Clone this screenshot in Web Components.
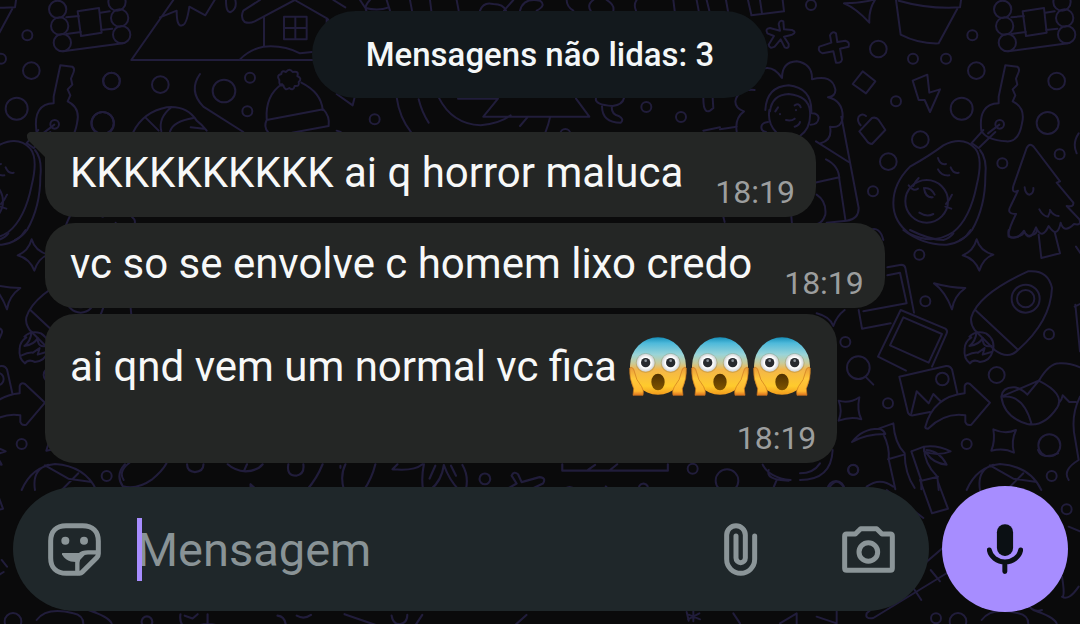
<!DOCTYPE html>
<html lang="pt-BR">
<head>
<meta charset="utf-8">
<meta name="viewport" content="width=device-width, initial-scale=1">
<title>Conversa</title>
<style>
  body { margin: 0; background: #0a0a0b; font-family: Roboto, "Liberation Sans", sans-serif; }
</style>
</head>
<body>
<chat-screen>
  <unread-pill>Mensagens não lidas: 3</unread-pill>
  <message-bubble slot="messages" time="18:19" tail>KKKKKKKKKK ai q horror maluca</message-bubble>
  <message-bubble slot="messages" time="18:19">vc so se envolve c homem lixo credo</message-bubble>
  <message-bubble slot="messages" time="18:19" stacked>ai qnd vem um normal vc fica <scream-emoji></scream-emoji><scream-emoji></scream-emoji><scream-emoji></scream-emoji></message-bubble>
  <message-composer slot="composer"></message-composer>
</chat-screen>

<script>
function define(name, html, setup) {
  const template = document.createElement('template');
  template.innerHTML = html;
  customElements.define(name, class extends HTMLElement {
    constructor() {
      super();
      this.attachShadow({ mode: 'open' }).append(template.content.cloneNode(true));
    }
    connectedCallback() { if (setup) setup(this, this.shadowRoot); }
  });
}

/* Line-art wallpaper: a motif sheet that repeats every 945 units. */
define('doodle-wallpaper', `
<style>
  :host { display: block; }
  svg { display: block; width: 100%; height: 100%; }
</style>
<svg viewBox="0 0 1080 624" preserveAspectRatio="xMidYMid slice" aria-hidden="true"
     fill="none" stroke="#211d3b" stroke-width="6" stroke-linecap="round" stroke-linejoin="round">
  <defs>
    <g id="sheet">
      <g transform="translate(720 0) scale(.33333)">
        <path d="M18 0l6 34M84 0l10 44M120 0l6 40M188 0l4 34L94 46"/>
        <circle cx="273" cy="15" r="15"/>
        <path d="M372 10q50 0 94-12q-20 30-18 70q-40-44-76-58z"/>
        <path d="M528 0l14 104q54 28 114 26L712 26M536 2q90 26 184 20l6-42"/>
        <circle cx="848" cy="28" r="26"/><circle cx="854" cy="78" r="26"/><circle cx="862" cy="128" r="26"/>
        <circle cx="1026" cy="6" r="26"/><circle cx="1034" cy="54" r="26"/><circle cx="1040" cy="104" r="26"/>
        <path d="M864 154l180-24M874 52l38-4M874 102l44-6M976 38l28-4M978 90l34-4M908 34l64-10 8 74-62 10z"/>
        <path d="M180 92l-4-20q4-14 14-8l2 24 24 2q16 6 0 14l-24 6 14 22q2 16-12 10l-12-24-18 22q-16 8-18-6l16-26-20-8q-8-14 8-16z"/>
        <path d="M334 128l-4-22q6-14 18-6l4 26 24-4q14 4 10 18l-26 6 6 32q-2 12-18 10l-8-34-32 6q-16-6-10-20z"/>
        <circle cx="475" cy="147" r="25"/><circle cx="579" cy="176" r="15"/><circle cx="678" cy="176" r="15"/>
        <circle cx="757" cy="106" r="15"/><circle cx="769" cy="212" r="25"/><circle cx="1010" cy="243" r="25"/>
        <circle cx="528" cy="304" r="15"/><circle cx="725" cy="326" r="33"/><circle cx="983" cy="369" r="33"/>
        <circle cx="601" cy="419" r="25"/><circle cx="505" cy="485" r="25"/><circle cx="847" cy="490" r="15"/>
        <circle cx="1019" cy="463" r="15"/><circle cx="459" cy="574" r="15"/>
        <path d="M428 214l38 30-28 36-40-28zM578 242l44-18 6 54 32-10-30 68-16-36h-18z"/>
        <path d="M456 354q12-4 20 6l20 30-40 42q-10 0-16-10l-22-28zM438 348q-12-10-22 2-6 14 6 26"/>
        <path d="M130 206q30-10 56 28q0-48 44-50 48 8 46 54 60-16 70 30 2 20-22 24 44 10 44 58-2 36-38 30 8 40-28 50M104 270q-50-4-58 34 0 22 26 30-28 20-22 60"/>
        <path d="M136 330q4-70 70-74 70 8 68 80M150 334q6-50 56-52 60 6 64 52 4 50-30 74M148 330q-6 40 20 66M144 366q-20 2-20 16 0 12 14 14M276 340q18 0 20 14-2 20-24 20"/>
        <path d="M166 334l8-12M180 342v1M224 316q14-8 18 6M228 330v1M198 360q16 4 26-4M224 380q14-4 16-14M288 424l98 62M364 350l52 274q0 34-36 38l-60 6M318 478q40 20 40 60l18 120M284 548l74-16M290 584q30 20 26 60-8 24-24 28M214 650l2 22M10 650l4 16M0 388l50-8M450 690q30-12 40 30"/>
        <path d="M836 290l20-94 36 4q8 6 4 16l-8 20 4 18-14 14 8 18-8 18 10 6q28 20 18 60-10 58-48 54-60-4-74-32-10-80 52-82zM790 390l-36 40M826 396l-50 48"/>
        <circle cx="839" cy="373" r="13"/><path d="M838 374l-34 26M756 430l20 14"/>
        <path d="M520 610q0-60 50-110 60-34 100-64 60-30 96 10 24 30 4 110-20 100-70 140-60 40-130 6-50-36-50-92zM780 450q22 26 16 80 0 90-40 160-14 20-36 30"/>
        <circle cx="620" cy="604" r="64"/><path d="M654 474q6 22 24 18M692 502q8 20 24 16M654 508q10 20 34 18M612 564q4 30 26 28M616 564q18 0 28 20M598 638q22 14 42 4M566 556q14 20 28 10M596 534q-12 12-16 24M678 612q10-10 18-28M676 620l18 6"/>
        <path d="M920 444q10-20 24 0l76 100-10 4 50 60q2 14-20 10l38 40q8 20-16 14-30 30-40-4-10 50-36 10-20 44-38 4-20 50-36 10-20 30-46 18-4-16 22-68-30 0-16-24l22-46q-20 10-14-14zM914 562q2 20 14 22 14-4 12-20M958 628q10 20 26 22 8-16 6-20 10 18 26 18M1076 400q-20 30-6 60"/>
      </g>
      <g transform="translate(800 230) scale(.33333)">
        <path d="M310 0q60 46 130 44 50-6 72-44M330 0q60 30 100 30 20-6 30-20M626 0q-6 30 26 20 20-4 20-16 10 20 26 10 14-4 12-14M716 14l8 70 56-14-16-64"/>
        <circle cx="358" cy="74" r="15"/><circle cx="376" cy="214" r="15"/><circle cx="136" cy="336" r="15"/><circle cx="747" cy="313" r="15"/>
        <circle cx="590" cy="435" r="24"/><circle cx="264" cy="520" r="15"/><circle cx="500" cy="642" r="15"/><circle cx="748" cy="646" r="33"/><circle cx="160" cy="719" r="15"/><circle cx="755" cy="738" r="15"/>
        <path d="M530 28q10 36 50 46-30 10-42 48-14-36-50-46 32-12 42-48zM402 160q50 14 94 14-34 24-40 64-20-54-54-78zM50 250q40 10 50 38 10-30 34-48"/>
        <path d="M262 112l42-8q10 0 12 10l26 134M262 136l38-8 20 92-130 24M176 240l10 56 86-16M302 240l134 56q8 6 4 14l-44 100M302 240l-68 140 84 42M310 262l116 50-40 86-116-52z"/>
        <path d="M514 262q20-70 170-138 60-6 72 50-4 100-102 186-30 30-70 0l-60-60q-14-20-10-38zM526 240l126 118"/>
        <circle cx="677" cy="206" r="42"/><circle cx="677" cy="206" r="26"/>
        <path d="M508 320q20-20 50-10 30 20 20 54-8 30-38 32-20-10-30 4-20-14-16-44 0-20 20-34M530 306q-4 30-22 42 30-4 40-24 0 30 26 24M500 376q20-10 34-8l20-14-6 20 26-8"/>
        <circle cx="175" cy="413" r="34"/><path d="M196 440l24 24"/>
        <path d="M116 512q30 10 62-10-8 40 6 66-30-10-68 4 12-30 0-60zM580 598q36 16 68 2-16 34-6 68-30-16-68-6 12-30 6-64z"/>
        <path d="M298 440l140-32q12-2 18 10l16 72M298 440l26 108q6 10 16 8l50-10M334 550l16-66 36 36 14-28 22 22"/><circle cx="427" cy="447" r="19"/>
        <path d="M376 590q24-90 118-100v-22q4-12 16-6l60 56-56 66q-14 4-18-8v-20q-60-10-112 40-10 0-8-6z"/>
        <path d="M604 500q4-30 40-28 22 4 38 22l36-44q30-50 60-50 30-2 62 12M716 452q80 40 56 80-40 60-90 50-70-20-78-82zM610 500q60-6 84 80M776 520q10-10 12-24l20 20h20M840 500q-30 60-14 130l10 60q-50 30-30 60M826 224l14 140M828 50l14 20M844 220l-20 10"/>
        <path d="M156 636q30-40 80-40 14 2 20 16-60 0-100 24zM236 596l44-16q4 60 34 90 0 60 30 104M250 612q20 40 16 76l20 90M264 688l48-14M334 664l38-14q0 50 40 90l4 40M334 664l30 88v26M364 752l50-12M372 650q40-6 80 14-40 16-80 0zM380 670q20 30 60 34-20-40-60-44"/>
        <path d="M500 780q30-70 100-78 90 6 124 78M540 780q-10-60 40-76M570 706l70 40 70 10M620 780l50-50M98 660q-4 90-98 90M60 700q-20 30-60 30M90 770q20-30 40 0M200 770q40-30 80 0"/>
      </g>
      <g transform="translate(680 450) scale(.33333)">
        <circle cx="38" cy="56" r="15"/><circle cx="141" cy="92" r="34"/><circle cx="519" cy="60" r="15"/><circle cx="1160" cy="178" r="15"/>
        <circle cx="768" cy="505" r="15"/><circle cx="834" cy="514" r="25"/><circle cx="468" cy="118" r="25"/>
        <path d="M248 44q20 40 84 46M266 60q-10 30 60 32M290 90l-10 24M620 120l110 84M720 90l36 100 48-14-30-80"/>
        <path d="M788 294L560 490q-6 18 20 14L806 366M700 414l24 36M752 360l28 34M800 330l16 20"/>
        <path d="M905 510q30-40 110-20 30 6 30 32M1040 460q20 30 46 20M1060 480q60 20 70 40M1166 230l34 14M1146 380q10 60 0 60 20 14 50-30M1074 0q10 30 60 10"/>
        <path d="M300 520l50-30v40M410 500l60 20v-36M160 490l20 30M20 486l6 26M40 484v30M26 494l34 14M58 490l-34 18"/>
      </g>
    </g>
  </defs>
  <use href="#sheet"/>
  <use href="#sheet" x="-945"/>
  <g transform="scale(.33333)">
    <circle cx="334" cy="243" r="25"/><circle cx="481" cy="254" r="25"/><circle cx="308" cy="370" r="34"/><circle cx="672" cy="273" r="34"/><circle cx="750" cy="233" r="15"/><circle cx="742" cy="334" r="15"/>
    <path d="M520 0L394 180h546M480 52l50-20q0 50 16 44 14 0 22-56l48 26 28-46M678 0q0 40 14 36 20-10 14-36"/>
    <path d="M780 0l-50 32q-10 20 4 34 14 6 30-2L884 0M884 0l98 56 14 20M792 52v84M980 56v20M720 178q30-30 70-38 60-6 110 20l36-4M852 50h68v68h-68zM886 50v68M852 84h68M1000 0l36 22"/>
    <path d="M600 222q-36 50 10 98l120 76M400 396q30-60 100-74 60-6 90 40 14 10 30 30M484 394q-10-40 30-72M510 394q10-30 70-40M436 352l40 40M572 382l40 4"/>
    <path d="M800 356q-4-70 46-104M904 248q60 30 64 82M800 360l170-32q20 20 16 50l-110 20M800 360q-10 20 4 36M838 240q-10-14 6-18 0-12 14-6 10-14 20 0 20-4 14 12 16 8 4 18 4 14-12 12-4 16-16 6-14 10-18-8-14 2-12-14z"/>
    <path d="M1010 282l48 34 6-24M1010 392l12 4M1080 0l16 24q40 10 70-2M1110 0q-20 20-10 34M1160 0l10 32M1230 0l6 32M1290 0l4 32M1370 0l6 32M1440 32q10-28 40-20 30 0 38 20M1512 32L1540 0M1560 32q10-40 60-30 20 14-10 30M1700 0q0 20 20 32M1780 0q-20 14-8 32M1820 0q24 14 20 32M1910 0q-10 14-2 32M2020 0l4 32M2090 0l6 32M2120 0l8 32"/>
    <circle cx="1124" cy="358" r="15"/><circle cx="1939" cy="321" r="15"/><circle cx="2043" cy="351" r="15"/><circle cx="1696" cy="402" r="15"/>
    <path d="M1190 292q8 60 44 106M1256 298q10 40 30 70M1316 292q40 80 126 84 60-6 90-30M1374 296h120l-44 54h318l-40-54M1650 352q-4 20-14 46M1584 350l-24 28M1788 294q-6 20 50 24 30-4 34-24M1806 318q0 50 56 50 12-10-6-20-24-6-20-30M2110 294q0 60 30 30l-2-30M2110 392l50-10"/>
    <!-- motifs that show between the last message and the composer -->
    <g transform="translate(390 1365) scale(1.07)">
      <path d="M-14 26q-28 30-6 62 40 10 80-18 30-24 42-46M160 26q0 20 22 22 24-2 24-22M274 26q20 18 50 20 34-2 48-20M328 26l-8 18M444 26q-6 32 22 32 24-4 20-32M540 26q-16 40-44 72M590 30v6M604 26q-16 32-4 72M688 26q-10 40-32 72M736 40l14-14M736 40q60 6 84-14M824 26q-8 40-2 72M856 30l-16 36M880 28q-6 44-38 70M880 28q14 40 42 70M900 30l14 28M932 28q18 30 10 68M1212 26v18h296V26M1284 42l20-14M1346 42l20-16M338 82v16M338 82l18 16M84 98q10-8 20 0M420 98q12-8 24 0M706 98q12-8 24 0M1056 96l28-16-14-22q6-14 18-4l10 22 50-14q20 2 10 18l-34 16M1218 98q14-16 30 0M1334 88l10 10M1428 98q-4-16 12-18 16 4 10 18"/>
      <circle cx="995" cy="67" r="15"/>
    </g>
    <!-- motifs that show under the composer -->
    <g transform="translate(0 1680) scale(1.07)">
      <path d="M506 152q-4 24 12 38M518 156l22 8 14-12M582 152v26M540 190q40-20 90 0M778 156q24 2 24 36M832 156q20 12 40-2M966 152l110 38M1098 156q4 24 22 24 22-4 22-26M1184 154l-24 36M1476 154l-40 36"/>
      <circle cx="412" cy="173" r="15"/>
    </g>
  </g>
</svg>`);

define('unread-pill', `
<style>
  :host { display: block; box-sizing: border-box; padding: 24px 54px; border-radius: 44px; background: #13191d;
          color: #f4f7f8; font-size: 33px; line-height: 39px; font-weight: 500; text-align: center; }
</style>
<slot></slot>`);

define('message-bubble', `
<style>
  :host { position: relative; display: flex; align-items: flex-end; column-gap: 32px; box-sizing: border-box;
          max-width: 88%; padding: 15px 21px 5px 25px; border-radius: 30px; background: #242625; }
  :host([tail]) { border-top-left-radius: 0; }
  :host([stacked]) { flex-direction: column; }
  p { margin: 0 0 13px; color: #f7f8f8; font-size: 42px; line-height: 52px; }
  :host([stacked]) p { padding-right: 3px; line-height: 76px; }
  time { color: #9c9e9e; font-size: 32px; line-height: 40px; }
  svg { display: none; position: absolute; top: 0; right: 100%; width: 19px; height: 25px; }
  :host([tail]) svg { display: block; }
</style>
<svg viewBox="0 0 19 25" aria-hidden="true"><path fill="#242625" d="M4 0H19V25L2 8Q-1 2 4 0z"/></svg>
<p><slot></slot></p>
<time></time>`, (host, root) => { root.querySelector('time').textContent = host.getAttribute('time'); });

define('scream-emoji', `
<style>
  :host { display: inline-block; width: 62px; height: 60px; vertical-align: -15px; }
  svg { display: block; width: 60px; height: 60px; }
</style>
<svg viewBox="0 0 180 180" role="img" aria-label="😱">
  <defs>
    <linearGradient id="skin" x1="0" y1="0" x2="0" y2="1">
      <stop offset="0" stop-color="#178fb9"/><stop offset=".1" stop-color="#4db9da"/><stop offset=".3" stop-color="#9ad4d8"/>
      <stop offset=".45" stop-color="#c9cb9a"/><stop offset=".56" stop-color="#f3b64a"/><stop offset=".85" stop-color="#ffcb2c"/><stop offset="1" stop-color="#f19a1c"/>
    </linearGradient>
    <linearGradient id="hand" x1="0" y1="0" x2="0" y2="1">
      <stop offset="0" stop-color="#e89b3a"/><stop offset=".4" stop-color="#ffc83a"/><stop offset=".85" stop-color="#ffb72e"/><stop offset="1" stop-color="#dc7220"/>
    </linearGradient>
    <radialGradient id="eye"><stop offset=".6" stop-color="#fff"/><stop offset="1" stop-color="#cfd3d5"/></radialGradient>
    <linearGradient id="mouth" x1="0" y1="0" x2="0" y2="1"><stop offset="0" stop-color="#4e3000"/><stop offset="1" stop-color="#805500"/></linearGradient>
  </defs>
  <ellipse cx="93" cy="90" rx="84" ry="86" fill="url(#skin)"/>
  <path d="M8 96q10-6 14 10 4 26 22 46 8 14 4 26H18l2-20Q6 128 8 96z" fill="url(#hand)" stroke="#cc761c" stroke-width="2"/>
  <path d="M178 96q-10-6-14 10-4 26-22 46-8 14-4 26h30l-2-20q14-30 12-62z" fill="url(#hand)" stroke="#cc761c" stroke-width="2"/>
  <circle cx="56" cy="81" r="30" fill="#866c3c" opacity=".28"/><circle cx="131" cy="81" r="30" fill="#866c3c" opacity=".28"/>
  <circle cx="56" cy="80" r="27" fill="url(#eye)"/><circle cx="131" cy="80" r="27" fill="url(#eye)"/>
  <circle cx="56" cy="80" r="14" fill="#272a2e"/><circle cx="131" cy="80" r="14" fill="#272a2e"/>
  <circle cx="56" cy="74" r="4" fill="#8a9197"/><circle cx="131" cy="74" r="4" fill="#8a9197"/>
  <ellipse cx="93" cy="138" rx="20" ry="25" fill="url(#mouth)"/>
</svg>`);

define('message-composer', `
<style>
  :host { display: flex; align-items: center; gap: 13px; padding: 0 12px 12px 13px; }
  button { display: block; flex: none; margin: 0; padding: 0; border: 0; background: none; color: #8b9598; }
  svg { display: block; fill: none; stroke: currentColor; stroke-width: 15; stroke-linecap: round; stroke-linejoin: round; }
  .field { display: flex; flex: 1; align-items: center; min-width: 0; height: 124px; box-sizing: border-box;
           padding: 0 34px 0 35px; border-radius: 62px; background: #1f272a; }
  .entry { position: relative; display: flex; flex: 1; align-items: center; min-width: 0; margin-left: 36px; }
  .caret { position: absolute; left: 0; width: 5px; height: 63px; background: #a78dff; }
  input { flex: 1; min-width: 0; margin: 0; padding: 0; border: 0; outline: 0; background: none;
          color: #f7f8f8; font: 47px/63px Roboto, "Liberation Sans", sans-serif; }
  input::placeholder { color: #899396; opacity: 1; }
  .camera { margin-left: 84px; }
  .mic { display: grid; place-items: center; width: 126px; height: 126px; border-radius: 50%; background: #a78dff; color: #0b1014; }
</style>
<div class="field">
  <button type="button" aria-label="Figurinhas">
    <svg width="53" height="53" viewBox="0 0 159 159">
      <path d="M95 151H55C25 151 8 134 8 105V54C8 25 25 8 54 8h50c30 0 47 17 47 46v38q0 7-5 12l-43 43q-4 4-8 4z"/>
      <path stroke-width="13" d="M150 88h-30q-32 0-32 32v30"/>
      <path fill="currentColor" stroke="none" d="M44 90h72L90 117C64 119 48 108 42 94q-1-4 2-4z"/>
      <circle fill="currentColor" stroke="none" cx="52" cy="53" r="12"/><circle fill="currentColor" stroke="none" cx="108" cy="53" r="12"/>
    </svg>
  </button>
  <div class="entry">
    <input type="text" placeholder="Mensagem" aria-label="Mensagem">
    <span class="caret"></span>
  </div>
  <button type="button" aria-label="Anexar">
    <svg width="34" height="53" viewBox="0 0 102 159"><path d="M92 39v70a42 42 0 0 1-84 0V36a28 28 0 0 1 56 0v69a14 14 0 0 1-28 0V39"/></svg>
  </button>
  <button type="button" class="camera" aria-label="Câmera">
    <svg width="53" height="47" viewBox="0 0 159 141"><path d="M8 30q0-6 6-6h26L56 8h48l16 16h25q6 0 6 6v97q0 6-6 6H14q-6 0-6-6z"/><circle cx="79" cy="78" r="28"/></svg>
  </button>
</div>
<button type="button" class="mic" aria-label="Gravar áudio">
  <svg width="36" height="50" viewBox="0 0 109 150"><rect x="30" y="0" width="49" height="96" rx="24" fill="currentColor" stroke="none"/><path d="M7 78a48 42 0 0 0 95 0M54 122v21"/></svg>
</button>`);

define('chat-screen', `
<style>
  :host { position: relative; display: flex; flex-direction: column; min-height: 100vh; box-sizing: border-box; padding-top: 11px; overflow: hidden; }
  doodle-wallpaper { position: absolute; inset: 0; }
  header { position: relative; display: flex; justify-content: center; }
  main { position: relative; display: flex; flex-direction: column; align-items: flex-start; gap: 6px; padding: 34px 45px 22px; }
  footer { position: relative; margin-top: auto; }
</style>
<doodle-wallpaper></doodle-wallpaper>
<header><slot></slot></header>
<main><slot name="messages"></slot></main>
<footer><slot name="composer"></slot></footer>`);
</script>
</body>
</html>
